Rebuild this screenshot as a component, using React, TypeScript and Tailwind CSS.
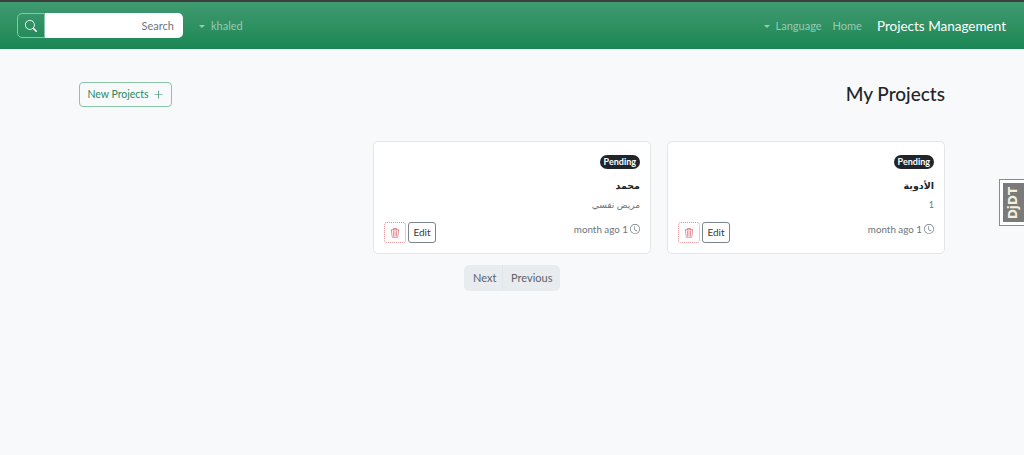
import React from 'react';
import { BsSearch, BsPlusLg, BsClock, BsTrash3 } from 'react-icons/bs';

const FONT = "font-['Lato','DejaVu_Sans',sans-serif]";

interface Project {
  title: string;
  subtitle: string;
}

const projects: Project[] = [
  { title: 'محمد', subtitle: 'مريض نفسي' },
  { title: 'الأدوية', subtitle: '1' },
];

function ProjectCard({ project }: { project: Project }) {
  return (
    <div className="w-[278px] h-[113px] bg-white border border-[#e4e5e7] rounded-[5px] px-[10px] pt-[13px] flex flex-col">
      <div className="flex justify-end">
        <span className="h-[14px] px-[4px] rounded-full bg-[#212529] text-white text-[9px] font-bold leading-[14px]">Pending</span>
      </div>
      <div className="mt-[9px] text-right text-[9.5px] font-bold leading-[16px] text-[#212529]">{project.title}</div>
      <div className="mt-[3px] text-right text-[9px] leading-[16px] text-[#6c757d]">{project.subtitle}</div>
      <div className="mt-[9px] flex justify-between items-start">
        <div className="flex gap-[2px]">
          <button className="w-[22px] h-[21px] rounded-[3px] border border-dotted border-[#ea868f] flex items-center justify-center text-[#dc5c66]">
            <BsTrash3 size={10} />
          </button>
          <button className="w-[28px] h-[21px] rounded-[3px] border border-[#7d858c] text-[10px] text-[#343a40] flex items-center justify-center">Edit</button>
        </div>
        <div className="flex items-center gap-[2px] text-[9.8px] leading-[14px] text-[#6c757d]">
          <span>month ago 1</span>
          <BsClock size={10} />
        </div>
      </div>
    </div>
  );
}

export default function App() {
  return (
    <div className={`${FONT} relative h-[455px] overflow-hidden bg-[#f8f9fa]`}>
      <header className="h-[49px] border-t-2 border-[#3d3d3d] bg-gradient-to-b from-[#3f9a70] to-[#198754] flex items-center justify-between pl-[17px] pr-[18px]">
        <div className="flex items-center">
          <div className="flex w-[166px] h-[25px]">
            <div className="w-[28px] border border-[#8cc4a9] rounded-l-[5px] flex items-center justify-center text-white">
              <BsSearch size={12} />
            </div>
            <div className="flex-1 bg-white rounded-r-[5px] text-right pr-[9px] text-[11px] leading-[25px] text-[#6c757d]">Search</div>
          </div>
          <div className="ml-[16px] pt-[1px] flex items-center gap-[6px] text-[11px] text-[#9cc9b3]">
            <span className="w-0 h-0 border-x-[3px] border-x-transparent border-t-[3px] border-t-[#9cc9b3]" />
            <span>khaled</span>
          </div>
        </div>
        <div className="flex items-center pt-[1px]">
          <div className="flex items-center gap-[6px] text-[11px] text-[#9cc9b3]">
            <span className="w-0 h-0 border-x-[3px] border-x-transparent border-t-[3px] border-t-[#9cc9b3]" />
            <span>Language</span>
          </div>
          <span className="ml-[11px] text-[11px] text-[#9cc9b3]">Home</span>
          <span className="ml-[15px] text-[13.5px] text-white">Projects Management</span>
        </div>
      </header>

      <main className="px-[79px]">
        <div className="pt-[33px] flex justify-between items-start">
          <button className="w-[93px] h-[25px] border border-[#8cc4a9] rounded-[4px] flex items-center justify-center gap-[4px] text-[10.5px] text-[#2b8a60]">
            New Projects
            <BsPlusLg size={11} />
          </button>
          <h1 className="text-[19px] leading-[23px] font-medium text-[#212529]">My Projects</h1>
        </div>

        <div className="mt-[34px] flex justify-end gap-[16px]">
          {projects.map((p) => (
            <ProjectCard key={p.title} project={p} />
          ))}
        </div>

        <div className="mt-[11px] ml-[385px] flex w-[96px] h-[26px] rounded-[5px] bg-[#e9ecef] text-[11px] leading-[26px] text-[#5c636a]">
          <span className="w-[39px] pl-[9px] border-r border-[#e2e5e8]">Next</span>
          <span className="pl-[8px]">Previous</span>
        </div>
      </main>

      <div className="absolute right-0 top-[179px] w-[25px] h-[47px] border border-[#8a8a8a] border-r-0 bg-white p-[3px] pr-0">
        <div className="w-full h-full bg-[#7a7a7a] flex items-center justify-center">
          <span className="-rotate-90 font-['DejaVu_Sans',sans-serif] text-[12px] font-bold text-[#f3f0dc] whitespace-nowrap">DjDT</span>
        </div>
      </div>
    </div>
  );
}
